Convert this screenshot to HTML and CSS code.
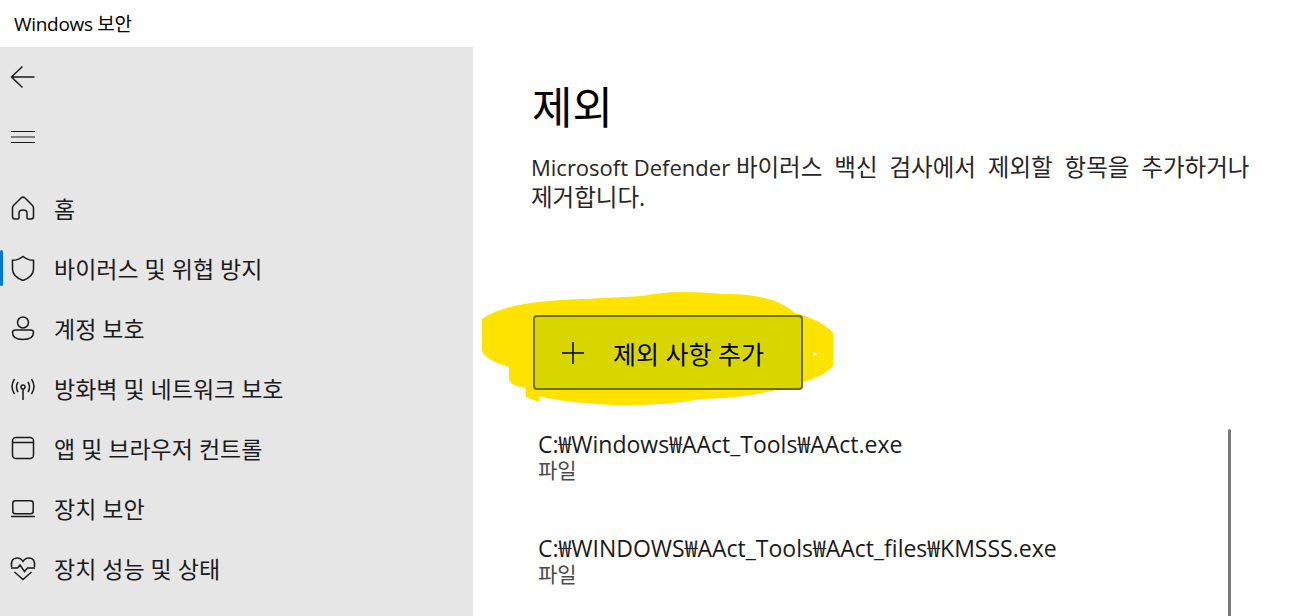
FILE: index.html
```html
<!DOCTYPE html>
<html lang="ko">
<head>
    <meta charset="UTF-8">
    <meta name="viewport" content="width=device-width, initial-scale=1.0">
    <title>Windows 보안</title>
    <link rel="stylesheet" href="styles.css">
</head>
<body>
    <div class="titlebar">Windows 보안</div>
    <div class="window">
        <nav class="sidebar">
            <div class="tool-btn">
                <svg class="icon" width="26" height="24" viewBox="0 0 26 24"><path d="M24.500 12H1.500M12.500 1.500 1.500 12l11 10.500"/></svg>
            </div>
            <div class="tool-btn">
                <svg class="icon thin" width="26" height="14" viewBox="0 0 26 14"><path d="M1 1.500h24M1 7h24M1 12.500h24"/></svg>
            </div>
            <ul class="nav-list">
                <li class="nav-item">
                    <svg class="icon" width="26" height="26" viewBox="0 0 26 26"><path d="M3.500 10.500 11 3q2-1.800 4 0l7.500 7.500q1 1 1 2.500v8.500q0 2.500-2.500 2.500h-3q-1 0-1-1v-5q0-3-4-3t-4 3v5q0 1-1 1H5q-2.500 0-2.500-2.500V13q0-1.500 1-2.500Z"/></svg>
                    <span>홈</span>
                </li>
                <li class="nav-item active">
                    <svg class="icon" width="26" height="26" viewBox="0 0 26 26"><path d="M13 1.500q5 3.800 10.500 3.800v8.700q0 7.500-10.500 11.500Q2.500 21.500 2.500 14V5.300q5.500 0 10.500-3.800Z"/></svg>
                    <span>바이러스 및 위협 방지</span>
                </li>
                <li class="nav-item">
                    <svg class="icon" width="26" height="26" viewBox="0 0 26 26"><circle cx="13" cy="7.500" r="5.500"/><path d="M5.500 15h15q3 0 3 2.500 0 7-10.500 7t-10.500-7q0-2.500 3-2.500Z"/></svg>
                    <span>계정 보호</span>
                </li>
                <li class="nav-item">
                    <svg class="icon" width="26" height="26" viewBox="0 0 26 26"><circle cx="13" cy="12" r="2"/><path d="M13 14v11M8 7q-3 5 0 10M18 7q3 5 0 10M4.500 4q-5 7.500 0 15M21.500 4q5 7.500 0 15"/></svg>
                    <span>방화벽 및 네트워크 보호</span>
                </li>
                <li class="nav-item">
                    <svg class="icon" width="26" height="26" viewBox="0 0 26 26"><rect x="2.500" y="2.500" width="21" height="21" rx="3.500"/><path d="M2.500 7.500h21"/></svg>
                    <span>앱 및 브라우저 컨트롤</span>
                </li>
                <li class="nav-item">
                    <svg class="icon" width="26" height="26" viewBox="0 0 26 26"><rect x="2.800" y="5.800" width="20.400" height="13" rx="2.500"/><path d="M1 21.500h24"/></svg>
                    <span>장치 보안</span>
                </li>
                <li class="nav-item">
                    <svg class="icon" width="26" height="26" viewBox="0 0 26 26"><path d="M1.500 12Q.5 3 7 3q4 0 6 3.500Q15 3 19 3q6.500 0 5.500 9M1 13h6.500l2.500-3 4.500 6.500 3-3.500H25M4.500 17 13 24.500 21.500 17"/></svg>
                    <span>장치 성능 및 상태</span>
                </li>
            </ul>
        </nav>
        <main class="content">
            <h1>제외</h1>
            <p class="desc">Microsoft Defender <span class="ko">바이러스 백신 검사에서 제외할 항목을 추가하거나<br>제거합니다.</span></p>
            <div class="add-wrap">
                <!-- 형광펜 표시 -->
                <svg class="marker" width="360" height="120" viewBox="0 0 360 120">
                    <path d="M9 30Q30 14 90 11 150 8 170 7 200 0 250 5 300 4 322 24 366 36 366 60 366 84 330 93 290 108 230 110 170 120 110 114 85 112 66 107L66 113 53 108 52 98Q38 98 36 90V78Q9 70 9 60Z"/>
                    <path class="speck" d="M340 63l5 2-5 2Z"/>
                </svg>
                <button class="add-btn">
                    <svg class="icon" width="24" height="24" viewBox="0 0 24 24"><path d="M12 1v22M1 12h22"/></svg>
                    <span>제외 사항 추가</span>
                </button>
            </div>
            <div class="item-area">
                <ul class="items">
                    <li class="item">
                        <div class="item-path">C:₩Windows₩AAct_Tools₩AAct.exe</div>
                        <div class="item-type">파일</div>
                    </li>
                    <li class="item">
                        <div class="item-path">C:₩WINDOWS₩AAct_Tools₩AAct_files₩KMSSS.exe</div>
                        <div class="item-type">파일</div>
                    </li>
                </ul>
                <div class="scrollbar"></div>
            </div>
        </main>
    </div>
</body>
</html>
```

FILE: styles.css
```css
html, body {
    height: 100%;
}
body {
    margin: 0;
    display: flex;
    flex-direction: column;
    height: 616px;
    overflow: hidden;
    background: #fff;
    color: #000;
    font-family: "Open Sans", "Noto Sans CJK KR", sans-serif;
}
.titlebar {
    height: 47px;
    padding-left: 14px;
    line-height: 49px;
    font-size: 19px;
    letter-spacing: -0.3px;
}
.window {
    flex: 1;
    display: flex;
    min-height: 0;
}
.sidebar {
    width: 473px;
    flex-shrink: 0;
    background: #e6e6e6;
}
.icon {
    display: block;
    flex-shrink: 0;
    fill: none;
    stroke: #1a1a1a;
    stroke-width: 1.5;
}
.icon.thin {
    stroke-width: 1.2;
}
.tool-btn {
    height: 60px;
    padding-left: 10px;
    display: flex;
    align-items: center;
}
.nav-list {
    list-style: none;
    margin: 11px 0 0;
    padding: 0;
}
.nav-item {
    height: 60px;
    padding-left: 10px;
    display: flex;
    align-items: center;
    gap: 18px;
    font-size: 23px;
    color: #1a1a1a;
    position: relative;
}
.nav-item.active::before {
    content: "";
    position: absolute;
    left: 0;
    top: 12px;
    width: 3px;
    height: 36px;
    border-radius: 2px;
    background: #0078d4;
}
.content {
    flex: 1;
    padding-left: 58px;
    min-width: 0;
}
h1 {
    margin: 28px 0 0 1px;
    font-size: 44px;
    font-weight: 400;
    line-height: 64px;
}
.desc {
    margin: 13px 0 0;
    width: 740px;
    font-size: 22px;
    line-height: 30px;
    color: #262626;
}
.desc .ko {
    font-size: 23.500px;
    word-spacing: 5.800px;
}
.add-wrap {
    position: relative;
    margin-top: 103px;
    margin-left: 2px;
    width: 270px;
}
.marker {
    position: absolute;
    left: -60px;
    top: -26px;
}
.marker path {
    fill: #ffe300;
    stroke: none;
}
.marker .speck {
    fill: #fff;
}
.add-btn {
    position: relative;
    width: 270px;
    height: 75px;
    padding: 0 0 0 26px;
    display: flex;
    align-items: center;
    gap: 28px;
    background: #d8d500;
    border: 2px solid #706f1a;
    border-radius: 4px;
    font: inherit;
    font-size: 25px;
    color: #000;
}
.add-btn .icon {
    stroke: #000;
}
.item-area {
    display: flex;
    margin-top: 39px;
}
.items {
    list-style: none;
    margin: 0;
    padding: 0 0 0 7px;
    width: 690px;
}
.item {
    height: 104px;
}
.item-path {
    font-size: 23px;
    line-height: 30px;
    color: #1a1a1a;
    white-space: nowrap;
}
.item-type {
    font-size: 21px;
    line-height: 22px;
    color: #4a4a4a;
}
.scrollbar {
    width: 3px;
    height: 190px;
    border-radius: 2px;
    background: #7a7a7a;
}
```
